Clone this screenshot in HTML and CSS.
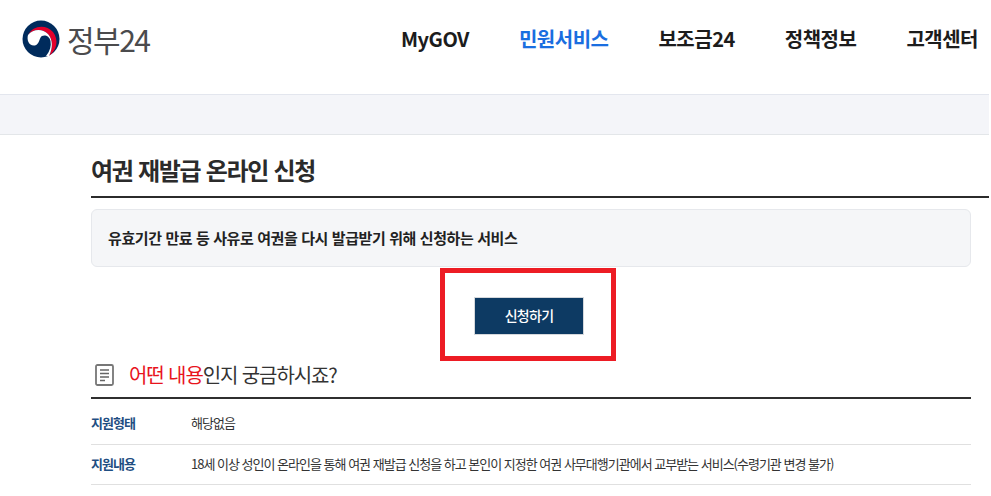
FILE: index.html
```html
<!DOCTYPE html>
<html lang="ko">
<head>
<meta charset="utf-8">
<title>여권 재발급 온라인 신청</title>
<link rel="stylesheet" href="styles.css">
</head>
<body>
<div class="page">
<header class="site-header">
  <a class="logo">
    <svg class="logo-mark" viewBox="0 0 38 38" width="38" height="38" aria-hidden="true">
      <circle cx="19" cy="19" r="18.5" fill="#002b5c"/>
      <path d="M6 15C11 5 24 4 31 12C37 20 35 30 27 36C31 28 31 20 26 14C20 8 11 9 6 15Z" fill="#e4002b"/>
      <path d="M6 15C11 9 20 8 26 14C31 20 31 28 27 36L24 36C28 31 29.500 26 28.500 21C27.500 16 23 14.500 20 16C17 17.500 18 24 13 25.500C7 26.500 4.500 20 6 15Z" fill="#fff"/>
    </svg>
    <span class="logo-text">정부24</span>
  </a>
  <nav class="main-nav">
    <a>MyGOV</a>
    <a class="active">민원서비스</a>
    <a>보조금24</a>
    <a>정책정보</a>
    <a>고객센터</a>
  </nav>
</header>
<div class="band"></div>
<main class="content">
  <h1 class="page-title">여권 재발급 온라인 신청</h1>
  <div class="summary">유효기간 만료 등 사유로 여권을 다시 발급받기 위해 신청하는 서비스</div>
  <div class="action">
    <a class="apply-btn">신청하기</a>
    <span class="highlight"></span>
  </div>
  <section class="info">
    <h2 class="info-title">
      <svg class="doc-icon" viewBox="0 0 20 22" width="20" height="22" aria-hidden="true">
        <rect x="1" y="1" width="17" height="20" rx="1.500" fill="none" stroke="#777" stroke-width="1.800"/>
        <path d="M5 6h9M5 9.500h9M5 13h9M5 16.500h5" stroke="#666" stroke-width="1.500"/>
      </svg>
      <span><em>어떤 내용</em>인지 궁금하시죠?</span>
    </h2>
    <dl class="info-row info-row-first">
      <dt>지원형태</dt>
      <dd>해당없음</dd>
    </dl>
    <dl class="info-row">
      <dt>지원내용</dt>
      <dd>18세 이상 성인이 온라인을 통해 여권 재발급 신청을 하고 본인이 지정한 여권 사무대행기관에서 교부받는 서비스(수령기관 변경 불가)</dd>
    </dl>
  </section>
</main>
</div>
</body>
</html>
```
FILE: styles.css
```css
* { box-sizing: border-box; }
html, body { margin: 0; padding: 0; }
body {
  height: 496px;
  overflow: hidden;
  background: #fff;
  color: #222;
  font-family: "Noto Sans CJK KR", "Noto Sans", sans-serif;
}
.page { width: 989px; }
.site-header {
  height: 94px;
  display: flex;
  justify-content: space-between;
  padding: 20px 11px 0 22px;
}
.logo { display: flex; align-items: center; height: 38px; gap: 7px; }
.logo-text {
  font-size: 30px;
  font-weight: 400;
  letter-spacing: -1.500px;
  color: #4b4b4d;
  line-height: 38px;
}
.main-nav { display: flex; gap: 50px; height: 38px; align-items: center; }
.main-nav a {
  font-size: 20px;
  font-weight: 700;
  letter-spacing: -.5px;
  color: #1c1c1c;
  line-height: 38px;
}
.main-nav a.active { color: #1a6ee0; }
.band {
  height: 41px;
  background: #f4f5f9;
  border-top: 1px solid #e3e6ee;
  border-bottom: 1px solid #e3e6e9;
}
.content { padding-left: 91px; }
.page-title {
  margin: 0;
  height: 63px;
  padding-top: 17px;
  width: 898px;
  font-size: 24px;
  line-height: 36px;
  font-weight: 700;
  letter-spacing: -1.300px;
  color: #2b2b2b;
  border-bottom: 2px solid #2b2b2b;
}
.summary {
  margin-top: 11px;
  width: 880px;
  height: 58px;
  padding-left: 16px;
  line-height: 56px;
  font-size: 15px;
  font-weight: 700;
  letter-spacing: -.4px;
  color: #222;
  background: #f5f6f8;
  border: 1px solid #e6e8ec;
  border-radius: 6px;
}
.action {
  position: relative;
  width: 880px;
  height: 95px;
  display: flex;
  justify-content: center;
  padding: 30px 4px 0 0;
}
.apply-btn {
  width: 110px;
  height: 38px;
  background: #0d3a63;
  border: 1px solid #d5d8dc;
  color: #fff;
  font-size: 14px;
  font-weight: 500;
  letter-spacing: -.7px;
  line-height: 35px;
  text-align: center;
}
.highlight {
  position: absolute;
  left: 349px;
  top: 1px;
  width: 176px;
  height: 93px;
  border: 5px solid #ed1c24;
}
.info { width: 880px; }
.info-title {
  margin: 0;
  height: 37px;
  padding: 0 0 10px 4px;
  display: flex;
  align-items: center;
  gap: 14px;
  font-size: 20px;
  line-height: 26px;
  font-weight: 400;
  letter-spacing: -1.100px;
  color: #333;
  border-bottom: 2px solid #2f2f2f;
}
.info-title em { font-style: normal; color: #e8141c; }
.doc-icon { flex: none; }
.info-row {
  margin: 0;
  height: 40px;
  padding-bottom: 2px;
  display: flex;
  align-items: center;
  font-size: 13px;
  letter-spacing: -1px;
  border-bottom: 1px solid #e0e0e0;
}
.info-row-first { height: 46px; padding: 2px 0 0; }
.info-row dt { width: 100px; font-weight: 700; color: #1f4e82; }
.info-row dd { margin: 0; color: #333; }
```
